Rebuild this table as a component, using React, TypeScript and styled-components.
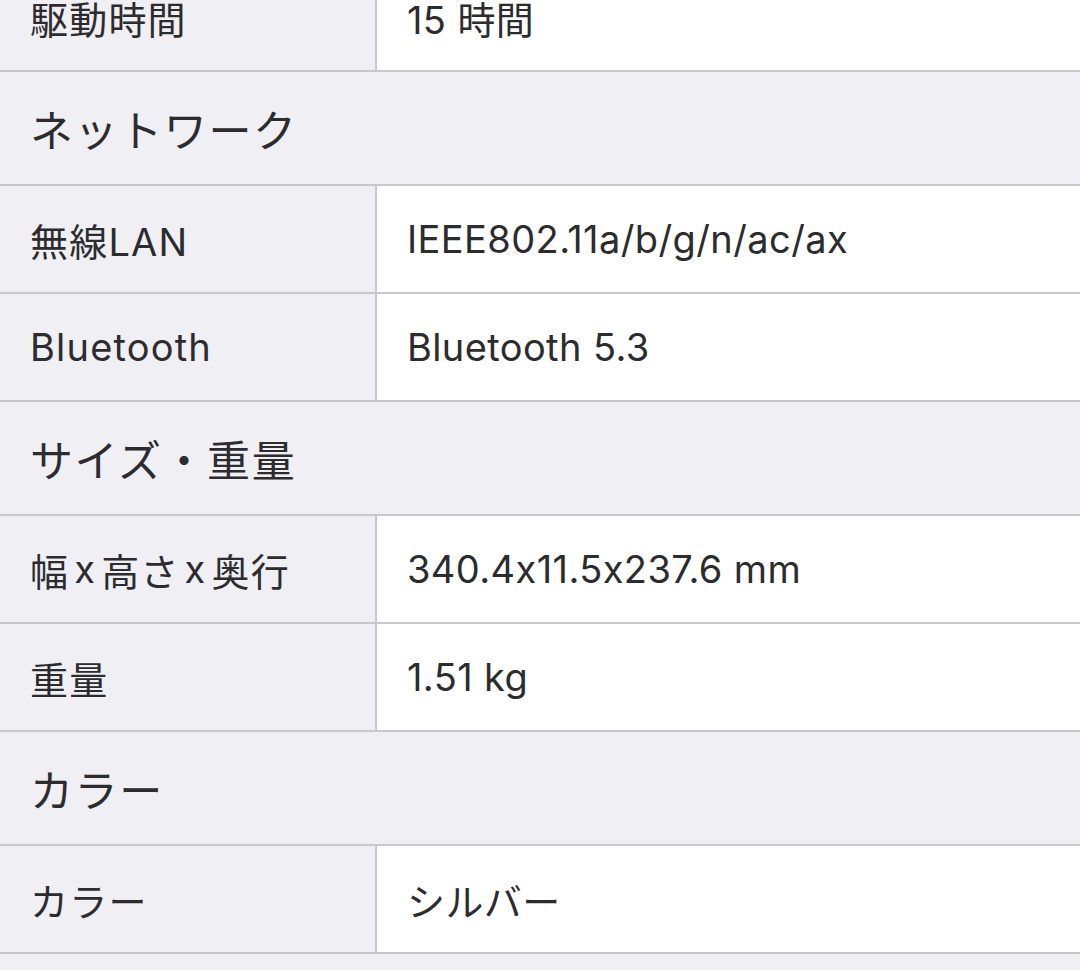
import React from 'react';
import styled, { createGlobalStyle } from 'styled-components';

const GlobalStyle = createGlobalStyle`
  html, body {
    margin: 0;
    padding: 0;
    background: #efeff4;
  }

  body {
    font-family: 'Inter', 'Noto Sans CJK JP', sans-serif;
    font-feature-settings: 'calt' 0;
    color: #2c2c2e;
    overflow: hidden;
  }
`;

const Table = styled.div`
  display: flex;
  flex-direction: column;
  margin-top: -36px;
`;

const SectionHeader = styled.div`
  display: flex;
  align-items: center;
  height: 112px;
  padding-left: 30px;
  background: #efeff4;
  border-bottom: 2px solid #c8c7cc;
  font-size: 43px;
  letter-spacing: 1.6px;
`;

const Row = styled.div`
  display: grid;
  grid-template-columns: 377px 1fr;
  height: 106px;
  border-bottom: 2px solid #c8c7cc;
`;

const Label = styled.div`
  display: flex;
  align-items: center;
  padding-left: 30px;
  background: #efeff4;
  border-right: 2px solid #c8c7cc;
  font-size: 38px;
  letter-spacing: 1.2px;
  white-space: nowrap;
`;

const Gap = styled.span`
  margin: 0 5px;
`;

const Value = styled.div`
  display: flex;
  align-items: center;
  padding-left: 30px;
  background: #fff;
  font-size: 38px;
  letter-spacing: 0.4px;
`;

type Spec = { label: React.ReactNode; key: string; value: string };
type Section = { title?: string; specs: Spec[] };

const sections: Section[] = [
  { specs: [{ key: 'drive', label: '駆動時間', value: '15 時間' }] },
  {
    title: 'ネットワーク',
    specs: [
      { key: 'wlan', label: '無線LAN', value: 'IEEE802.11a/b/g/n/ac/ax' },
      { key: 'bt', label: 'Bluetooth', value: 'Bluetooth 5.3' },
    ],
  },
  {
    title: 'サイズ・重量',
    specs: [
      {
        key: 'size',
        label: (
          <>
            幅<Gap>x</Gap>高さ<Gap>x</Gap>奥行
          </>
        ),
        value: '340.4x11.5x237.6 mm',
      },
      { key: 'weight', label: '重量', value: '1.51 kg' },
    ],
  },
  {
    title: 'カラー',
    specs: [{ key: 'color', label: 'カラー', value: 'シルバー' }],
  },
];

export default function App(): React.ReactElement {
  return (
    <>
      <GlobalStyle />
      <Table>
        {sections.map((section, i) => (
          <React.Fragment key={i}>
            {section.title && <SectionHeader>{section.title}</SectionHeader>}
            {section.specs.map((spec) => (
              <Row key={spec.key}>
                <Label>{spec.label}</Label>
                <Value>{spec.value}</Value>
              </Row>
            ))}
          </React.Fragment>
        ))}
      </Table>
    </>
  );
}
